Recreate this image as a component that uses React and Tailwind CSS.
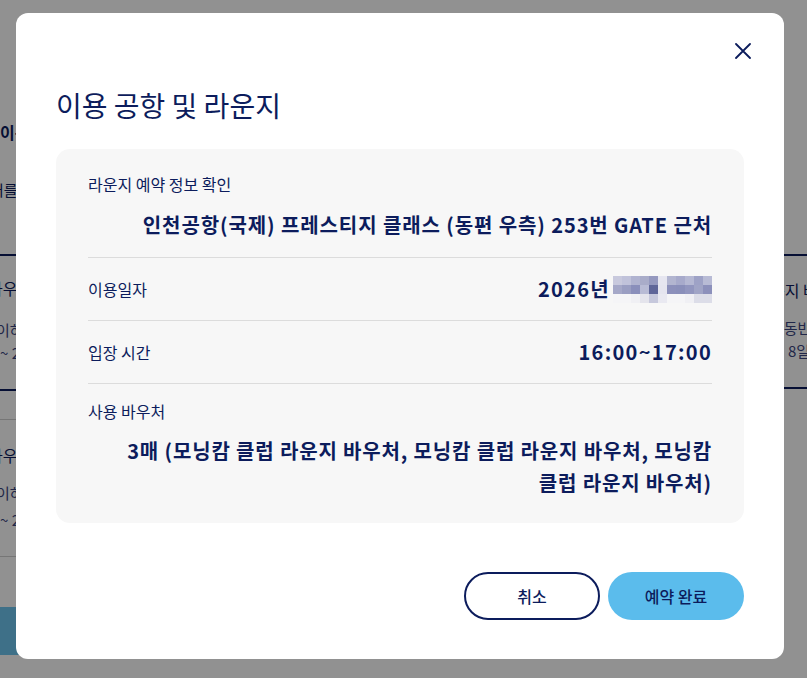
import React from "react";

const navy = "text-[#0c1c5c]";

const mosaic = [
  ["#c8c9dd", "#c0c2da", "#b0b3d0", "#a9acc9", "#9599bf", "#e6e6f0", "#b2b5d0", "#a7aacb", "#b5b8d3", "#9ea2c6", "#b8bbd5"],
  ["#a5a8c8", "#9a9ec2", "#8a8fbb", "#b8bbd5", "#5f6699", "#e5e5ef", "#8c90bb", "#8a8fba", "#9296bf", "#a0a4c6", "#8c90bb"],
  ["#f5f5f7", "#f5f5f7", "#f0f0f4", "#e4e4ec", "#c6c8dc", "#e9e9f1", "#f5f5f7", "#f5f5f7", "#f0f0f4", "#dcdde8", "#dcdde8"],
];

const Mosaic = () => (
  <div className="flex flex-col">
    {mosaic.map((row, r) => (
      <div key={r} className="flex">
        {row.map((c, i) => (
          <div key={i} className="h-[9px] w-[9px]" style={{ backgroundColor: c }} />
        ))}
      </div>
    ))}
  </div>
);

const BackgroundPage = () => (
  <div className={`flex h-full ${navy}`}>
    {/* left column */}
    <div className="-ml-[12px] flex w-[360px] shrink-0 flex-col pt-[120px]">
      <div className="pl-[12px] text-[16px] leading-[24px] font-bold whitespace-nowrap">이용 가능 라운지</div>
      <div className="mt-[34px] pl-[2px] text-[15px] leading-[24px] whitespace-nowrap">처를 선택해 주세요</div>
      <div className="mt-[52px] border-y-2 border-[#0c1c5c] pt-[20px] pb-[25px]">
        <div className="text-[16px] leading-[24px] whitespace-nowrap">바우처 라운지</div>
        <div className="mt-[18px] pl-[8px] text-[15px] leading-[24px] text-[#3a4680] whitespace-nowrap">이하 이용 가능</div>
        <div className="pl-[12px] text-[15px] leading-[22px] text-[#3a4680] whitespace-nowrap">~ 2026.12.31</div>
      </div>
      <div className="mt-[28px] border-y border-[#d0d0d0] pt-[23px] pb-[24px]">
        <div className="text-[16px] leading-[24px] whitespace-nowrap">바우처 라운지</div>
        <div className="mt-[14px] pl-[8px] text-[15px] leading-[24px] text-[#3a4680] whitespace-nowrap">이하 이용 가능</div>
        <div className="mt-[3px] pl-[12px] text-[15px] leading-[24px] text-[#3a4680] whitespace-nowrap">~ 2026.12.31</div>
      </div>
      <div className="mt-[50px] h-[48px] bg-[#6ec5ef]" />
    </div>
    {/* right column */}
    <div className="ml-[428px] flex w-[300px] shrink-0 flex-col pt-[254px]">
      <div className="border-y-2 border-[#0c1c5c] pt-[22px] pb-[25px]">
        <div className="-ml-[6px] text-[16px] leading-[24px] whitespace-nowrap">운지 바우처</div>
        <div className="mt-[14px] -ml-[4px] text-[15px] leading-[24px] text-[#3a4680] whitespace-nowrap">· 동반 가능</div>
        <div className="pl-[12px] text-[15px] leading-[22px] text-[#3a4680] whitespace-nowrap">8일 이내</div>
      </div>
    </div>
  </div>
);

const Row = ({ label, children }) => (
  <div className="flex items-center justify-between border-t border-[#dcdcdc] py-[16px]">
    <div className="text-[16px] leading-[30px]">{label}</div>
    <div className="flex items-center text-[20px] leading-[30px] font-bold tracking-[1.3px]">{children}</div>
  </div>
);

export default function App() {
  return (
    <div className="relative h-[678px] w-full overflow-hidden bg-white font-['Noto_Sans_CJK_KR','Noto_Sans',sans-serif]">
      <BackgroundPage />
      <div className="absolute inset-0 bg-black/[0.43]" />
      <div className="absolute inset-0 flex justify-start pt-[13px] pl-[16px]">
        <div className={`relative h-[646px] w-[768px] rounded-[12px] bg-white px-10 pt-[72px] ${navy}`}>
          <button className="absolute top-[30px] right-[33px] h-4 w-4">
            <svg viewBox="0 0 16 16" className="h-4 w-4" fill="none" stroke="#0c1c5c" strokeWidth="1.8" strokeLinecap="round">
              <path d="M1 1L15 15M15 1L1 15" />
            </svg>
          </button>
          <h2 className="text-[28px] leading-[40px] font-normal">이용 공항 및 라운지</h2>

          <div className="mt-[24px] rounded-[14px] bg-[#f7f7f7] px-8 pt-[24px] pb-[24px]">
            <div className="pb-[17px]">
              <div className="text-[16px] leading-[22px]">라운지 예약 정보 확인</div>
              <div className="mt-[15px] text-right text-[20px] leading-[30px] font-bold tracking-[0.9px]">
                인천공항(국제) 프레스티지 클래스 (동편 우측) 253번 GATE 근처
              </div>
            </div>
            <Row label="이용일자">
              <span>2026년</span>
              <span className="ml-[3px]">
                <Mosaic />
              </span>
            </Row>
            <Row label="입장 시간">16:00~17:00</Row>
            <div className="border-t border-[#dcdcdc] pt-[16px]">
              <div className="text-[16px] leading-[22px]">사용 바우처</div>
              <div className="mt-[13px] text-right text-[20px] leading-[32px] font-bold tracking-[0.85px]">
                3매 (모닝캄 클럽 라운지 바우처, 모닝캄 클럽 라운지 바우처, 모닝캄
                <br />
                클럽 라운지 바우처)
              </div>
            </div>
          </div>

          <div className="mt-[49px] flex justify-end gap-2">
            <button className="h-[48px] w-[136px] rounded-full border-2 border-[#0c1c5c] bg-white text-[16px] font-medium">
              취소
            </button>
            <button className="h-[48px] w-[136px] rounded-full bg-[#5bbcec] text-[16px] font-medium">
              예약 완료
            </button>
          </div>
        </div>
      </div>
    </div>
  );
}
